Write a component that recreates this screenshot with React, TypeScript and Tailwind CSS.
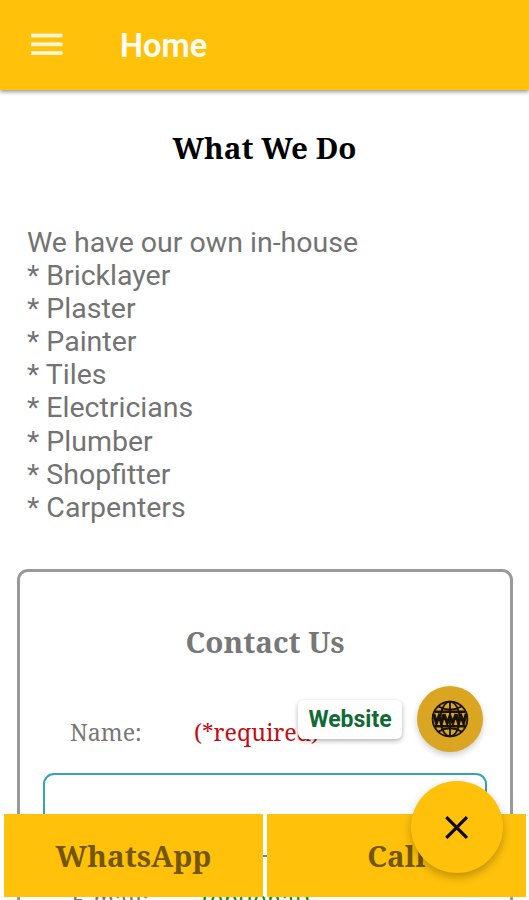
import React from 'react';

const SERVICES = ['Bricklayer', 'Plaster', 'Painter', 'Tiles', 'Electricians', 'Plumber', 'Shopfitter', 'Carpenters'];

const SERIF = "font-['Noto_Serif','DejaVu_Serif_Condensed',serif]";

const MenuIcon: React.FC = () => (
    <svg className="w-8 h-6" viewBox="0 0 32 24" fill="#fff6d6">
        <rect x="0" y="0.6" width="31.5" height="3.8" />
        <rect x="0" y="9.4" width="31.5" height="3.8" />
        <rect x="0" y="18.2" width="31.5" height="3.8" />
    </svg>
);

const CloseIcon: React.FC = () => (
    <svg className="w-6 h-6" viewBox="0 0 24 24" fill="none" stroke="#0a0800" strokeWidth="3.2">
        <path d="M1.3 2.2 22 22.9M22 2.2 1.3 22.9" />
    </svg>
);

const GlobeIcon: React.FC = () => (
    <svg className="w-[38px] h-[38px]" viewBox="0 0 38 38" fill="none" stroke="#171204" strokeWidth="1.8">
        <circle cx="19" cy="19" r="17.4" />
        <ellipse cx="19" cy="19" rx="9.5" ry="17.4" />
        <path d="M19 1.6v34.8M7.5 6.5Q19 13 30.5 6.5M7.5 31.5Q19 25 30.5 31.5" />
        <path d="M4 11.8h30M4 26.2h30" strokeWidth="2.4" />
        {/* www band */}
        <path
            d="M2.8 14l2.6 9 2.6-7 2.6 7 2.4-9M13 14l3.2 9 2.8-7 2.8 7 3.2-9M25 14l2.4 9 2.6-7 2.6 7 2.6-9"
            strokeWidth="3"
        />
    </svg>
);

const App: React.FC = () => {
    return (
        <div className="relative flex flex-col w-[529px] h-[900px] overflow-hidden bg-white font-['Roboto',sans-serif]">
            {/* App bar */}
            <header className="flex items-center shrink-0 h-[90px] pl-[31px] bg-[#ffc10a] shadow-[0_2px_4px_rgba(0,0,0,0.4)]">
                <MenuIcon />
                <h1 className="ml-[57px] pt-0.5 text-[32.5px] leading-[40px] font-semibold text-[#fffdf5]">Home</h1>
            </header>

            {/* Content */}
            <main className="flex flex-col shrink-0">
                <h2 className={`${SERIF} h-10 mt-[38px] text-center text-[29.6px] leading-10 font-bold text-black`}>
                    What We Do
                </h2>

                <div className="mt-[58px] pl-[27px] text-[28.5px] leading-[33.1px] text-[#737373]">
                    <p>We have our own in-house</p>
                    {SERVICES.map(service => (
                        <p key={service}>* {service}</p>
                    ))}
                </div>

                <section className={`${SERIF} mt-[45px] ml-[17px] mr-4 h-[400px] rounded-[11px] border-[3px] border-[#999999] text-[#777777]`}>
                    <h2 className="mt-[50px] text-center text-[29.6px] leading-10 font-bold">Contact Us</h2>
                    <div className="flex mt-[54px] pl-[50px] text-[23.2px] leading-8">
                        <span className="w-[124px]">Name:</span>
                        <span className="text-[#c40d12]">(*required)</span>
                    </div>
                    <div className="mt-[25px] ml-[23px] mr-[23px] h-[84px] rounded-[11px] border-2 border-[#36a3b0]" />
                    <div className="flex mt-[26px] pl-[51px] text-[23.2px] leading-8">
                        <span className="w-[131px]">E-mail:</span>
                        <span className="text-[#168a16]">(optional)</span>
                    </div>
                </section>
            </main>

            {/* Bottom actions */}
            <nav className={`${SERIF} absolute left-1 right-[3px] bottom-[3px] flex gap-1 h-[83px] text-[29.6px] font-bold text-[#735700]`}>
                <button className="flex-1 bg-[#ffc10a] pt-0.5">WhatsApp</button>
                <button className="flex-1 bg-[#ffc10a] pt-0.5">Call</button>
            </nav>

            {/* Speed dial */}
            <div className="absolute right-[46px] top-[686px] flex items-center gap-[15px]">
                <span className="flex items-center justify-center w-[104px] h-[39px] pt-0.5 rounded-md bg-white text-[23px] font-bold text-[#0f6b35] shadow-[0_2px_5px_rgba(0,0,0,0.3)]">
                    Website
                </span>
                <button className="flex items-center justify-center w-[66px] h-[66px] rounded-full bg-[#daa520] shadow-[0_3px_6px_rgba(0,0,0,0.2)]">
                    <GlobeIcon />
                </button>
            </div>
            <button className="absolute right-[26px] top-[781px] flex items-center justify-center w-[92px] h-[92px] rounded-full bg-[#ffc10a] shadow-[0_4px_8px_rgba(0,0,0,0.25)]">
                <CloseIcon />
            </button>
        </div>
    );
};

export default App;
